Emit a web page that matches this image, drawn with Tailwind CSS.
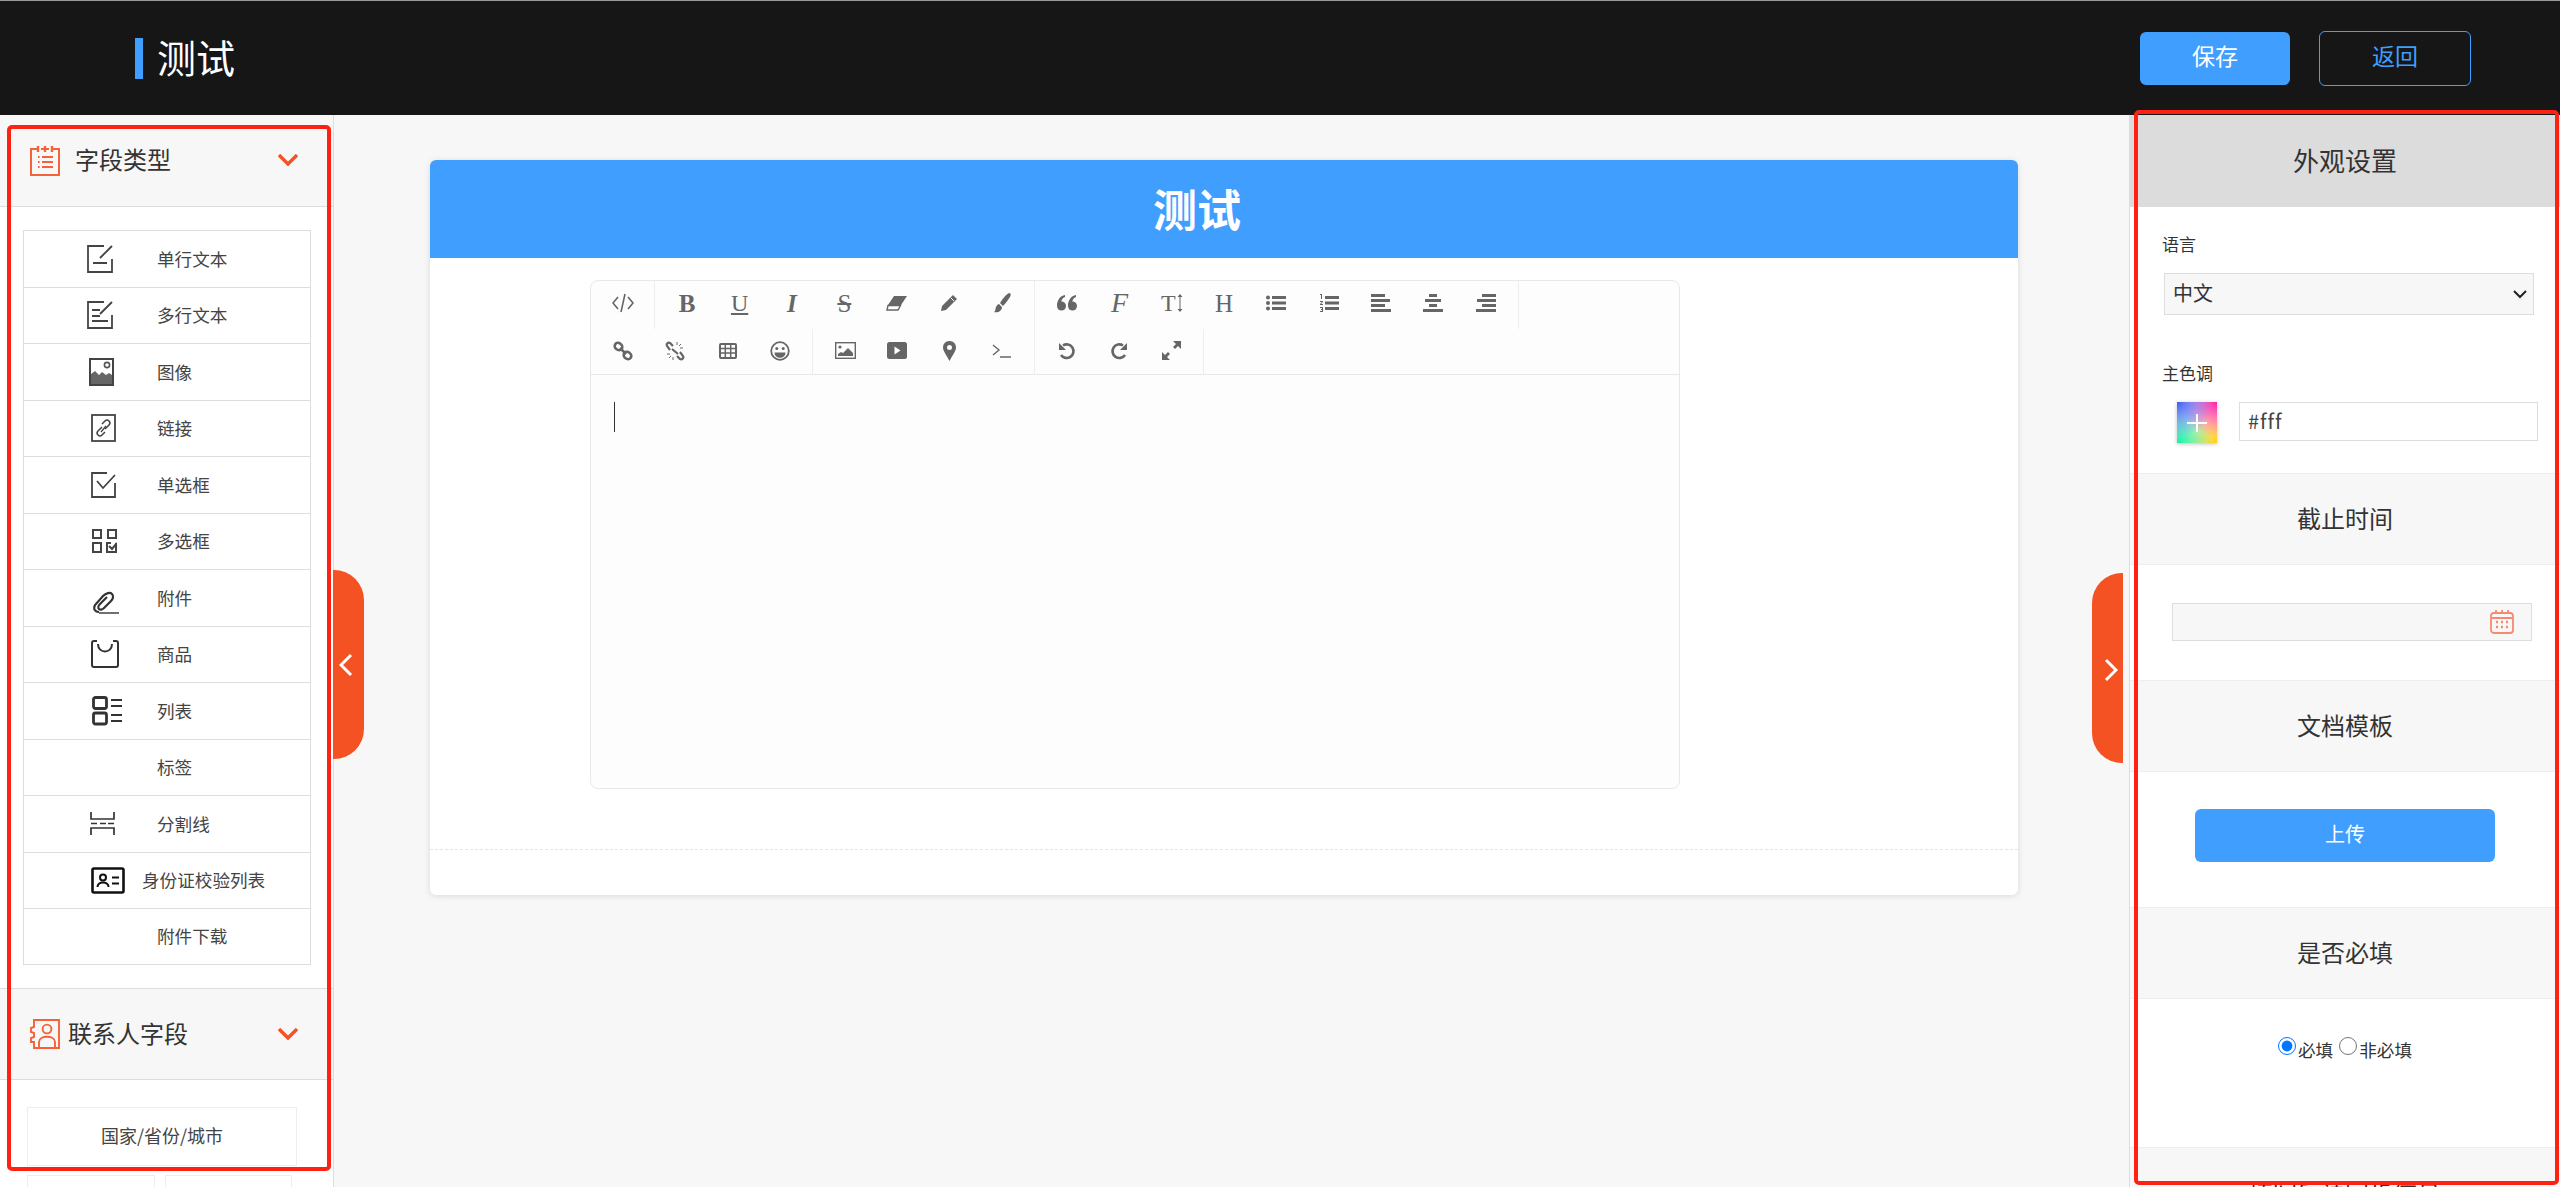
<!DOCTYPE html>
<html lang="en">
<head>
    <meta charset="UTF-8">
    <title>测试</title>
    <script src="https://cdn.jsdelivr.net/npm/@tailwindcss/browser@4"></script>
</head>
<body class="relative h-screen overflow-hidden bg-[#f7f7f7] text-[#333] font-['Noto_Sans_CJK_SC','Liberation_Sans',sans-serif]">
    <!-- Top bar -->
    <header class="h-[115px] bg-[#161616] border-t border-[#999] flex items-center justify-between">
        <div class="flex items-center ml-[135px]">
            <span class="w-[8px] h-[41px] bg-[#409eff]"></span>
            <h1 class="ml-[14px] pb-[3px] text-[39px] leading-none text-white">测试</h1>
        </div>
        <div class="flex items-center mr-[89px]">
            <button class="w-[150px] h-[53px] pb-[5px] rounded-[6px] bg-[#409eff] text-white text-[23px]">保存</button>
            <button class="ml-[29px] w-[152px] h-[55px] pb-[5px] rounded-[6px] border border-[#409eff] text-[#409eff] text-[23px]">返回</button>
        </div>
    </header>

    <div class="flex h-[1072px]">
        <!-- Left panel -->
        <aside class="w-[334px] shrink-0 bg-white border-r border-[#ddd] overflow-hidden">
            <div class="h-[92px] bg-[#f7f7f7] border-b border-[#ddd] flex items-center relative">
                <svg class="ml-[30px]" width="30" height="30" viewBox="0 0 30 30" fill="none" stroke="#f5623a" stroke-width="2"><path d="M7 3H1v26h28V3h-6M11 3h8"/><path d="M8 0v6M15 0v6M22 0v6" stroke-width="2.4"/><path d="M8 11h1.6M8 16h1.6M8 21h1.6M12 11h11M12 16h11M12 21h11" stroke-width="2.2"/></svg>
                <span class="ml-[15px] pb-[3px] text-[24px]">字段类型</span>
                <svg class="absolute left-[278px] top-[39px]" width="20" height="12" viewBox="0 0 20 12" fill="none" stroke="#f55223" stroke-width="3.4"><path d="M1 1l9 9 9-9"/></svg>
            </div>
            <div class="pt-[23px] pl-[23px]">
                <ul class="w-[288px] border border-[#ddd] text-[17.6px] text-[#444]">
                    <li class="h-[56.5px] border-b border-[#ddd] flex items-center">
                        <div class="w-[133px] pl-[63px]"><svg width="26" height="28" viewBox="0 0 26 28" fill="none" stroke="#444" stroke-width="1.8"><path d="M17 1H1v26h24V14M6 18h14M13 13L25 1"/></svg></div>
                        <span>单行文本</span>
                    </li>
                    <li class="h-[56.5px] border-b border-[#ddd] flex items-center">
                        <div class="w-[133px] pl-[63px]"><svg width="26" height="28" viewBox="0 0 26 28" fill="none" stroke="#444" stroke-width="1.8"><path d="M17 1H1v26h24V14M5 9h8M5 15h8M5 20h16M13 13L25 1"/></svg></div>
                        <span>多行文本</span>
                    </li>
                    <li class="h-[56.5px] border-b border-[#ddd] flex items-center">
                        <div class="w-[133px] pl-[65px]"><svg width="25" height="28" viewBox="0 0 25 28"><rect x="1" y="1" width="23" height="26" fill="#fff" stroke="#444" stroke-width="2"/><path d="M2 26V16l4-3 4 4 3-3 4 3 3-2 3 2v9z" fill="#666"/><circle cx="18" cy="7" r="2.6" fill="none" stroke="#555" stroke-width="1.6"/></svg></div>
                        <span>图像</span>
                    </li>
                    <li class="h-[56.5px] border-b border-[#ddd] flex items-center">
                        <div class="w-[133px] pl-[67px]"><svg width="25" height="28" viewBox="0 0 25 28" fill="none" stroke="#444" stroke-width="1.8"><rect x="1" y="1" width="23" height="26"/><path d="M11 13l-4 4a2.6 2.6 0 0 0 4 4l3-3M14 15l4-4a2.6 2.6 0 0 0-4-4l-3 3" stroke-width="1.5"/><path d="M10 18l5-6" stroke-width="1.3"/></svg></div>
                        <span>链接</span>
                    </li>
                    <li class="h-[56.5px] border-b border-[#ddd] flex items-center">
                        <div class="w-[133px] pl-[67px]"><svg width="25" height="26" viewBox="0 0 25 26" fill="none" stroke="#444" stroke-width="1.8"><path d="M16 1H1v24h23V11M6 9l6 7L24 3"/></svg></div>
                        <span>单选框</span>
                    </li>
                    <li class="h-[56.5px] border-b border-[#ddd] flex items-center">
                        <div class="w-[133px] pl-[68px]"><svg width="25" height="24" viewBox="0 0 25 24" fill="none" stroke="#444" stroke-width="2"><rect x="1" y="1" width="8" height="8"/><rect x="16" y="1" width="8" height="8"/><rect x="1" y="14" width="8" height="9"/><path d="M24 14v9H15v-9h4M17 17l3 3 5-6"/></svg></div>
                        <span>多选框</span>
                    </li>
                    <li class="h-[56.5px] border-b border-[#ddd] flex items-center">
                        <div class="w-[133px] pl-[68px]"><svg class="mt-[10px]" width="27" height="23" viewBox="0 0 27 23" fill="none" stroke="#333" stroke-width="2.2"><path d="M7 21c-4 0-6-3-4-7L11 5c3-3 7-4 9-2s1 5-1 7l-7 7c-2 2-4 2-5 1s-1-3 1-5l7-7"/><path d="M7 22h20" stroke-width="1.4"/></svg></div>
                        <span>附件</span>
                    </li>
                    <li class="h-[56.5px] border-b border-[#ddd] flex items-center">
                        <div class="w-[133px] pl-[67px]"><svg width="28" height="28" viewBox="0 0 28 28" fill="none" stroke="#333" stroke-width="2"><path d="M6 1H3a2 2 0 0 0-2 2v22a2 2 0 0 0 2 2h22a2 2 0 0 0 2-2V3a2 2 0 0 0-2-2h-3"/><path d="M7 4c0 10 14 10 14 0"/></svg></div>
                        <span>商品</span>
                    </li>
                    <li class="h-[56.5px] border-b border-[#ddd] flex items-center">
                        <div class="w-[133px] pl-[68px]"><svg width="30" height="30" viewBox="0 0 30 30" fill="none" stroke="#333" stroke-width="2.8"><rect x="1.5" y="1.5" width="13" height="11" rx="2"/><rect x="1.5" y="17" width="13" height="11" rx="2"/><path d="M19 4h11M19 10h11M19 19h11M19 25h11" stroke-width="2.2"/></svg></div>
                        <span>列表</span>
                    </li>
                    <li class="h-[56.5px] border-b border-[#ddd] flex items-center">
                        <div class="w-[133px]"></div>
                        <span>标签</span>
                    </li>
                    <li class="h-[56.5px] border-b border-[#ddd] flex items-center">
                        <div class="w-[133px] pl-[66px]"><svg width="25" height="23" viewBox="0 0 25 23" fill="none" stroke="#333" stroke-width="1.7"><path d="M1 0v7h23V0M1 23v-7h23v7"/><path d="M1 11.5h6M10 11.5h6M18 11.5h6"/></svg></div>
                        <span>分割线</span>
                    </li>
                    <li class="h-[56.5px] border-b border-[#ddd] flex items-center">
                        <div class="w-[118px] pl-[67px]"><svg width="34" height="27" viewBox="0 0 34 27" fill="none" stroke="#111" stroke-width="2.6"><rect x="1.5" y="1.5" width="31" height="24" rx="1.5"/><circle cx="12" cy="10.5" r="3" stroke-width="2"/><path d="M6.5 20c0-6 11-6 11 0M21 10.5h7M21 16.5h7" stroke-width="2"/></svg></div>
                        <span>身份证校验列表</span>
                    </li>
                    <li class="h-[55px] flex items-center">
                        <div class="w-[133px]"></div>
                        <span>附件下载</span>
                    </li>
                </ul>
            </div>
            <div class="mt-[23px] h-[92px] bg-[#f7f7f7] border-y border-[#ddd] flex items-center relative">
                <svg class="ml-[30px]" width="30" height="30" viewBox="0 0 30 30" fill="none" stroke="#f5623a" stroke-width="1.9"><path d="M4 1h25v28H4v-6H1v-4l3-1v-4l-3-1V9l3-1z"/><circle cx="17" cy="10" r="4.4"/><path d="M9 29v-6c0-7 16-7 16 0v6"/></svg>
                <span class="ml-[8px] pb-[3px] text-[24px]">联系人字段</span>
                <svg class="absolute left-[278px] top-[39px]" width="20" height="12" viewBox="0 0 20 12" fill="none" stroke="#f55223" stroke-width="3.4"><path d="M1 1l9 9 9-9"/></svg>
            </div>
            <div class="pt-[27px] pl-[27px] text-[18px] text-[#444]">
                <div class="w-[270px] h-[59px] pb-[2px] border border-[#eee] flex items-center justify-center">国家/省份/城市</div>
                <div class="mt-[9px] flex gap-[10px]">
                    <div class="w-[128px] h-[59px] border border-[#eee]"></div>
                    <div class="w-[127px] h-[59px] border border-[#eee]"></div>
                </div>
            </div>
        </aside>

        <!-- Center form -->
        <main class="flex-1 pt-[45px] pl-[96px]">
            <div class="w-[1588px] h-[735px] bg-white rounded-[6px] shadow-[0_1px_6px_rgba(0,0,0,0.12)] overflow-hidden">
                <div class="h-[98px] bg-[#409eff] flex items-center justify-center pr-[54px] pb-[3px] text-white text-[44px] font-bold">测试</div>
                <div class="ml-[160px] mt-[22px] w-[1090px] h-[509px] rounded-[8px] border border-[#e8e8e8] bg-[#fdfdfd] overflow-hidden text-[#666]">
                    <div class="h-[94px] border-b border-[#e8e8e8]">
                        <div class="h-[48px] flex font-['Liberation_Serif',serif]">
                            <div class="w-[64px] px-[6px] pb-[4px] border-r border-[#eee] flex items-center">
                                <span class="w-[52.4px] flex justify-center"><svg width="22" height="20" viewBox="0 0 22 20" fill="none" stroke="#666" stroke-width="1.6"><path d="M6 4L1 10l5 6M16 4l5 6-5 6M13 1L9 19"/></svg></span>
                            </div>
                            <div class="w-[380px] px-[6px] pb-[4px] border-r border-[#eee] flex items-center">
                                <span class="w-[52.4px] text-center text-[25px] leading-none font-bold">B</span>
                                <span class="w-[52.4px] text-center text-[24px] leading-none underline">U</span>
                                <span class="w-[52.4px] text-center text-[25px] leading-none italic font-bold">I</span>
                                <span class="w-[52.4px] text-center text-[25px] leading-none line-through">S</span>
                                <span class="w-[52.4px] flex justify-center"><svg width="22" height="16" viewBox="0 0 22 16" fill="#666"><path d="M8 1h13l-6 9H2z"/><path d="M2 10.5h12.5L12 15H1z" fill="none" stroke="#666" stroke-width="1.4"/></svg></span>
                                <span class="w-[52.4px] flex justify-center"><svg width="18" height="18" viewBox="0 0 18 18" fill="#666"><path d="M13 1l4 4L6 16l-5 1 1-5z"/><path d="M11 4l3 3" stroke="#fff" stroke-width="1"/></svg></span>
                                <span class="w-[52.4px] flex justify-center"><svg width="20" height="20" viewBox="0 0 20 20" fill="#666"><path d="M17 0c2 0 2 2 1 4-2 3-4 6-7 9l-3-3c2-3 5-8 9-10z"/><path d="M7 11l3 3c0 4-4 6-8 5 2-1 1-3 2-5 1-2 2-3 3-3z"/></svg></span>
                            </div>
                            <div class="w-[484px] px-[6px] pb-[4px] border-r border-[#eee] flex items-center">
                                <span class="w-[52.4px] flex justify-center"><svg width="20" height="16" viewBox="0 0 20 16" fill="#666"><circle cx="4.5" cy="11" r="4.5"/><circle cx="15.5" cy="11" r="4.5"/><path d="M0 11C0 5 3 1 8 0v2C5 3 4 6 4 9zM11 11c0-6 3-10 8-11v2c-3 1-4 4-4 7z"/></svg></span>
                                <span class="w-[52.4px] text-center text-[28px] leading-none italic">F</span>
                                <span class="w-[52.4px] flex items-center justify-center text-[24px] leading-none">T<svg class="ml-[1px]" width="6" height="18" viewBox="0 0 6 18" fill="#666"><path d="M3 0l2.5 3h-2v12h2L3 18 .5 15h2V3h-2z"/></svg></span>
                                <span class="w-[52.4px] text-center text-[25px] leading-none">H</span>
                                <span class="w-[52.4px] flex justify-center"><svg width="20" height="16" viewBox="0 0 20 16" fill="#666"><circle cx="2" cy="2.5" r="2"/><circle cx="2" cy="8" r="2"/><circle cx="2" cy="13.5" r="2"/><path d="M6 1h14v3H6zM6 6.5h14v3H6zM6 12h14v3H6z"/></svg></span>
                                <span class="w-[52.4px] flex justify-center"><svg width="20" height="18" viewBox="0 0 20 18" fill="#666"><path d="M1 0h2v5H2V1H1zM1 7h3v1L2 10h2v1H1v-1l2-2H1zM1 13h3v5H1v-1h2v-1H2v-1h1v-1H1z"/><path d="M6 2h14v3H6zM6 7.500h14v3H6zM6 13h14v3H6z"/></svg></span>
                                <span class="w-[52.4px] flex justify-center"><svg width="20" height="18" viewBox="0 0 20 18" fill="#666"><path d="M0 0h14v3H0zM0 5h19v3H0zM0 10h14v3H0zM0 15h20v3H0z"/></svg></span>
                                <span class="w-[52.4px] flex justify-center"><svg width="20" height="18" viewBox="0 0 20 18" fill="#666"><path d="M6 0h8v3H6zM2 5h16v3H2zM6 10h8v3H6zM0 15h20v3H0z"/></svg></span>
                                <span class="w-[52.4px] flex justify-center"><svg width="20" height="18" viewBox="0 0 20 18" fill="#666"><path d="M6 0h14v3H6zM1 5h19v3H1zM6 10h14v3H6zM0 15h20v3H0z"/></svg></span>
                            </div>
                        </div>
                        <div class="h-[46px] flex">
                            <div class="w-[222px] px-[6px] pb-[3px] border-r border-[#eee] flex items-center">
                                <span class="w-[52.4px] flex justify-center"><svg width="20" height="20" viewBox="0 0 20 20" fill="none" stroke="#666" stroke-width="2.6"><ellipse cx="5.500" cy="5.500" rx="4" ry="3.4" transform="rotate(35 5.500 5.500)"/><ellipse cx="14.500" cy="14.500" rx="4" ry="3.4" transform="rotate(35 14.500 14.500)"/><path d="M7 7l6 6"/></svg></span>
                                <span class="w-[52.4px] flex justify-center"><svg width="20" height="20" viewBox="0 0 20 20" fill="none" stroke="#666" stroke-width="2.2"><path d="M5 9L2 5c-1-2 1-4 3-3l3 3M15 11l3 4c1 2-1 4-3 3l-3-3M7 8l6 5"/><path d="M12 1v3M16 3l-2 2M18 7h-3M2 13h3M4 17l2-2M8 19v-3" stroke-width="1"/></svg></span>
                                <span class="w-[52.4px] flex justify-center"><svg width="18" height="16" viewBox="0 0 18 16" fill="none" stroke="#666" stroke-width="1.500"><rect x="1" y="1" width="16" height="14" rx="1" stroke-width="2"/><path d="M1 5.500h16M1 10h16M6.300 1v14M11.700 1v14"/></svg></span>
                                <span class="w-[52.4px] flex justify-center"><svg width="20" height="20" viewBox="0 0 20 20"><circle cx="10" cy="10" r="8.800" fill="none" stroke="#666" stroke-width="1.800"/><circle cx="6.800" cy="7.500" r="1.500" fill="#666"/><circle cx="13.200" cy="7.500" r="1.500" fill="#666"/><path d="M4.500 11.500h11c0 7-11 7-11 0z" fill="#666"/></svg></span>
                            </div>
                            <div class="w-[222px] px-[6px] pb-[3px] border-r border-[#eee] flex items-center">
                                <span class="w-[52.4px] flex justify-center"><svg width="21" height="17" viewBox="0 0 21 17"><rect x=".7" y=".7" width="19.600" height="15.600" fill="none" stroke="#666" stroke-width="1.400"/><circle cx="5" cy="5" r="1.600" fill="#666"/><path d="M3 14v-2l3-2 2 1 5-5 5 5v3z" fill="#666"/></svg></span>
                                <span class="w-[52.4px] flex justify-center"><svg width="20" height="17" viewBox="0 0 20 17"><rect width="20" height="17" rx="2.500" fill="#666"/><path d="M7.500 4.500l6 4-6 4z" fill="#fff"/></svg></span>
                                <span class="w-[52.4px] flex justify-center"><svg width="13" height="20" viewBox="0 0 13 20"><path fill-rule="evenodd" d="M6.500 0A6.300 6.300 0 0 0 0 6.500C0 10 4 15 6.500 20 9 15 13 10 13 6.500A6.300 6.300 0 0 0 6.500 0zm0 4a2.500 2.500 0 1 1 0 5 2.500 2.500 0 0 1 0-5z" fill="#666"/></svg></span>
                                <span class="w-[52.4px] flex justify-center"><svg width="19" height="14" viewBox="0 0 19 14" fill="none" stroke="#666" stroke-width="1.400"><path d="M1 1l6 5-6 5M8 13h11"/></svg></span>
                            </div>
                            <div class="w-[169px] px-[6px] pb-[3px] border-r border-[#eee] flex items-center">
                                <span class="w-[52.4px] flex justify-center"><svg width="18" height="18" viewBox="0 0 18 18" fill="none" stroke="#666" stroke-width="2.600"><path d="M5 3.500A6.800 6.800 0 1 1 3 13"/><path d="M1 1v7h7z" fill="#666" stroke="none"/></svg></span>
                                <span class="w-[52.4px] flex justify-center"><svg width="18" height="18" viewBox="0 0 18 18" fill="none" stroke="#666" stroke-width="2.600"><path d="M13 3.500A6.800 6.800 0 1 0 15 13"/><path d="M17 1v7h-7z" fill="#666" stroke="none"/></svg></span>
                                <span class="w-[52.4px] flex justify-center"><svg width="19" height="19" viewBox="0 0 19 19" fill="#666"><path d="M11 0h8v8l-3-3-3 3-2-2 3-3zM0 11l3 3 3-3 2 2-3 3 3 3H0z"/></svg></span>
                            </div>
                        </div>
                    </div>
                    <div class="ml-[23px] mt-[27px] w-[1px] h-[30px] bg-[#333]"></div>
                </div>
                <div class="mt-[60px] border-t border-dashed border-[#e5e5e5]"></div>
            </div>
        </main>

        <!-- Right panel -->
        <aside class="w-[431px] shrink-0 bg-white border-l border-[#ddd] overflow-hidden">
            <div class="h-[92px] pb-[3px] bg-[#dcdcdc] flex items-center justify-center text-[26px]">外观设置</div>
            <div class="h-[266px] pl-[32px] pt-[25px]">
                <div class="text-[17px] leading-[24px]">语言</div>
                <div class="relative mt-[17px] ml-[2px] w-[370px]">
                    <select class="block appearance-none w-full h-[42px] px-[8px] pb-[2px] bg-[#f7f7f7] border border-[#ddd] text-[20px]">
                        <option>中文</option>
                    </select>
                    <svg class="absolute right-[7px] top-[17px]" width="14" height="9" viewBox="0 0 14 9" fill="none" stroke="#222" stroke-width="2"><path d="M1 1l6 6 6-6"/></svg>
                </div>
                <div class="mt-[46px] text-[17px] leading-[24px]">主色调</div>
                <div class="mt-[17px] flex">
                    <div class="ml-[15px] w-[40px] h-[41px] flex items-center justify-center shadow-[0_1px_4px_rgba(0,0,0,0.25)] bg-white bg-[radial-gradient(circle_at_0_0,#3a5cf5,transparent_62%),radial-gradient(circle_at_100%_0,#ff1fa0,transparent_62%),radial-gradient(circle_at_0_100%,#10f0a0,transparent_62%),radial-gradient(circle_at_100%_100%,#ffd010,transparent_62%)]">
                        <svg width="20" height="18" viewBox="0 0 20 18" stroke="#fff" stroke-width="2"><path d="M0 9h20M10 0v18"/></svg>
                    </div>
                    <input class="ml-[22px] w-[299px] h-[39px] px-[8px] pb-[2px] border border-[#ddd] text-[20px] tracking-[1px] text-[#444]" value="#fff">
                </div>
            </div>
            <div class="h-[92px] pb-[3px] bg-[#f7f7f7] border-y border-[#eee] flex items-center justify-center text-[24px]">截止时间</div>
            <div class="h-[115px] pl-[42px] pt-[38px]">
                <div class="w-[360px] h-[38px] bg-[#f7f7f7] border border-[#ddd] flex items-center justify-end pr-[17px]">
                    <svg width="24" height="24" viewBox="0 0 24 24" fill="none" stroke="#f58a70" stroke-width="1.800"><rect x="1" y="3" width="22" height="20" rx="3"/><path d="M1 8h22M6 0v4M12 0v4M18 0v4"/><path d="M6 12h2M11 12h2M16 12h2M6 17h2M11 17h2M16 17h2" stroke-width="2.400"/></svg>
                </div>
            </div>
            <div class="h-[92px] pb-[3px] bg-[#f7f7f7] border-y border-[#eee] flex items-center justify-center text-[24px]">文档模板</div>
            <div class="h-[135px] pt-[37px]">
                <button class="block mx-auto w-[300px] h-[53px] pb-[3px] rounded-[6px] bg-[#409eff] text-white text-[20px]">上传</button>
            </div>
            <div class="h-[92px] pb-[3px] bg-[#f7f7f7] border-y border-[#eee] flex items-center justify-center text-[24px]">是否必填</div>
            <div class="h-[148px] pt-[38px] flex justify-center items-start text-[17.6px]">
                <label class="flex items-start"><input type="radio" name="required" checked class="w-[18px] h-[18px] m-0"><span class="ml-[2px]">必填</span></label>
                <label class="ml-[6px] flex items-start"><input type="radio" name="required" class="w-[18px] h-[18px] m-0"><span class="ml-[2px]">非必填</span></label>
            </div>
            <div class="h-[92px] pb-[3px] bg-[#f7f7f7] border-y border-[#eee] flex items-center justify-center text-[24px]">填写后请同步信息</div>
        </aside>
    </div>

    <!-- Collapse tabs -->
    <div class="absolute left-[333px] top-[570px] w-[31px] h-[189px] pr-[6px] rounded-r-[30px] bg-[#f55223] flex items-center justify-center">
        <svg width="14" height="24" viewBox="0 0 14 24" fill="none" stroke="#fff" stroke-width="3"><path d="M12 2L2 12l10 10"/></svg>
    </div>
    <div class="absolute left-[2092px] top-[573px] w-[31px] h-[190px] pl-[7px] pt-[4px] rounded-l-[30px] bg-[#f55223] flex items-center justify-center">
        <svg width="14" height="24" viewBox="0 0 14 24" fill="none" stroke="#fff" stroke-width="3"><path d="M2 2l10 10L2 22"/></svg>
    </div>

    <!-- Red outlines -->
    <div class="absolute left-[7px] top-[125px] w-[324px] h-[1046px] border-[4px] border-[#ff2212] rounded-[5px]"></div>
    <div class="absolute left-[2134px] top-[110px] w-[425px] h-[1075px] border-[4px] border-[#ff2212] rounded-[5px]"></div>
</body>
</html>
